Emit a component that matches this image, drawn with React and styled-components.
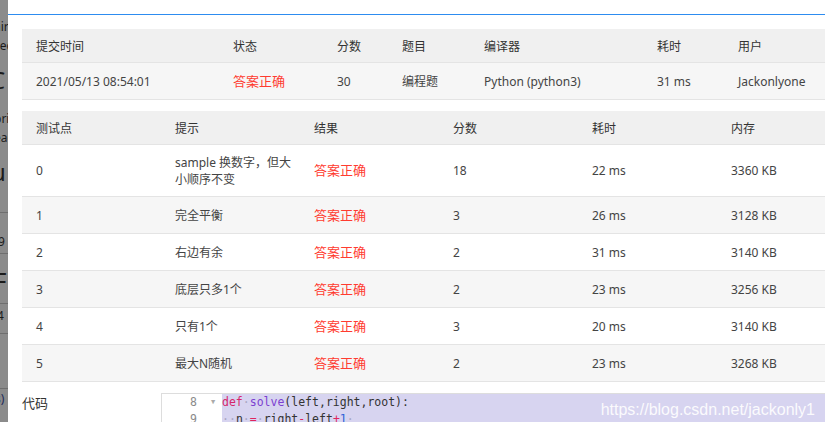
import React from 'react';
import styled, {createGlobalStyle} from 'styled-components';

const GlobalStyle = createGlobalStyle`
    html, body {
        margin: 0;
        padding: 0;
        overflow: hidden;
        background: #fff;
    }
    body {
        font-family: "Noto Sans", "Noto Sans CJK SC", sans-serif;
        font-size: 12px;
        color: #333;
    }
`;

const StyledRoot = styled.div`
    display: flex;
    width: 825px;
    height: 422px;
    overflow: hidden;
`;

const Backdrop = styled.div`
    flex: 0 0 8px;
    background: #8b8b8b;
    overflow: hidden;
    display: flex;
    flex-direction: column;
`;

const BackdropText = styled.div`
    flex-shrink: 0;
    white-space: nowrap;
    color: #1b1b1b;
    font-size: ${props => props.$size || 12}px;
    line-height: ${props => props.$size ? props.$size + 2 : 18}px;
    margin-top: ${props => props.$top || 0}px;
    margin-left: ${props => props.$shift || -6}px;
`;

const BackdropRule = styled.div`
    flex-shrink: 0;
    height: 1px;
    background: #6f6f6f;
    margin-top: ${props => props.$top || 0}px;
`;

const Modal = styled.div`
    flex: 1;
    min-width: 0;
    background: #fff;
    display: flex;
    flex-direction: column;
`;

const TopBar = styled.div`
    flex-shrink: 0;
    height: 14px;
    border-bottom: 1px solid #2d8cf0;
`;

const Body = styled.div`
    flex-shrink: 0;
    padding: 14px 0 0 14px;
    display: flex;
    flex-direction: column;
`;

const Table = styled.table`
    flex-shrink: 0;
    border-collapse: collapse;
    table-layout: fixed;
    width: ${props => props.$width}px;
    margin-bottom: ${props => props.$gap || 0}px;
`;

const Th = styled.th`
    background: #f0f0f0;
    font-weight: normal;
    text-align: left;
    color: #333;
    height: 33px;
    padding: 0 4px 0 14px;
    border-bottom: 1px solid #e4e4e4;
`;

const Tr = styled.tr`
    background: ${props => props.$odd ? '#f6f6f6' : '#fff'};
`;

const Td = styled.td`
    height: ${props => props.$height || 36}px;
    padding: 0 4px 0 14px;
    border-bottom: 1px solid #e4e4e4;
    color: ${props => props.$ok ? '#ff3b30' : '#444'};
    font-size: ${props => props.$ok ? 13 : 12}px;
    line-height: 17px;
    vertical-align: middle;
`;

const CodeRow = styled.div`
    flex-shrink: 0;
    display: flex;
    align-items: flex-start;
    margin-top: 11px;
`;

const CodeLabel = styled.div`
    width: 139px;
    font-size: 13px;
    color: #333;
    padding-top: 0;
`;

const Editor = styled.div`
    flex: 1;
    display: flex;
    border-left: 1px solid #ddd;
    border-top: 1px solid #ddd;
    height: 40px;
    position: relative;
    font-family: "DejaVu Sans Mono", "Liberation Mono", monospace;
    font-size: 11.5px;
    line-height: 17px;
`;

const Gutter = styled.div`
    width: 60px;
    background: #fff;
    color: #8a8a8a;
`;

const GutterLine = styled.div`
    display: flex;
    align-items: center;
    height: 17px;
    padding-left: 26px;
`;

const LineNo = styled.span`
    width: 9px;
    text-align: right;
`;

const Fold = styled.span`
    margin-left: 14px;
    font-size: 7px;
    color: #aaa;
`;

const Lines = styled.div`
    flex: 1;
    background: #d7d4f0;
    white-space: pre;
    color: #333;
`;

const Tok = styled.span`
    color: ${props => ({
        kw: '#d6276c',
        fn: '#7c3fd0',
        op: '#e0245e',
        num: '#2d62d8',
        ws: '#a9a6c4'
    }[props.$kind] || '#333')};
`;

const Watermark = styled.div`
    position: absolute;
    right: 10px;
    top: 6px;
    font-family: "Liberation Sans", Arial, sans-serif;
    font-size: 16px;
    line-height: 20px;
    color: #fff;
    opacity: 0.9;
`;

const summary = {
    columns: [
        {title: '提交时间', width: 197},
        {title: '状态', width: 104},
        {title: '分数', width: 65},
        {title: '题目', width: 82},
        {title: '编译器', width: 173},
        {title: '耗时', width: 81},
        {title: '用户', width: 118}
    ],
    row: ['2021/05/13 08:54:01', '答案正确', '30', '编程题', 'Python (python3)', '31 ms', 'Jackonlyone']
};

const caseColumns = ['测试点', '提示', '结果', '分数', '耗时', '内存'];

const cases = [
    ['0', 'sample 换数字，但大小顺序不变', '18', '22 ms', '3360 KB'],
    ['1', '完全平衡', '3', '26 ms', '3128 KB'],
    ['2', '右边有余', '2', '31 ms', '3140 KB'],
    ['3', '底层只多1个', '2', '23 ms', '3256 KB'],
    ['4', '只有1个', '3', '20 ms', '3140 KB'],
    ['5', '最大N随机', '2', '23 ms', '3268 KB']
];

const Dot = () => <Tok $kind="ws">·</Tok>;

const App = () => (
    <StyledRoot>
        <GlobalStyle />
        <Backdrop>
            <BackdropText $top={18}>air</BackdropText>
            <BackdropText $top={1}>sec</BackdropText>
            <BackdropText $size={24} $top={12} $shift={-10}>C</BackdropText>
            <BackdropText $top={17}>pri</BackdropText>
            <BackdropText $top={1}>eac</BackdropText>
            <BackdropText $size={24} $top={12} $shift={-9}>u</BackdropText>
            <BackdropText $top={5}>&nbsp;</BackdropText>
            <BackdropRule $top={4} />
            <BackdropText $top={20} $shift={-2}>9</BackdropText>
            <BackdropRule $top={2} />
            <BackdropText $size={24} $top={14} $shift={-6}>F</BackdropText>
            <BackdropRule $top={9} />
            <BackdropText $top={3} $shift={-3}>4</BackdropText>
            <BackdropRule $top={8} />
            <BackdropRule $top={54} />
            <BackdropText $top={1} $shift={-5} style={{color: '#1d2a5a'}}>s)</BackdropText>
        </Backdrop>
        <Modal>
            <TopBar />
            <Body>
                <Table $width={820} $gap={11}>
                    <colgroup>
                        {summary.columns.map(c => <col key={c.title} style={{width: c.width}} />)}
                    </colgroup>
                    <thead>
                        <tr>
                            {summary.columns.map(c => <Th key={c.title}>{c.title}</Th>)}
                        </tr>
                    </thead>
                    <tbody>
                        <Tr $odd>
                            {summary.row.map((v, i) => (
                                <Td key={i} $ok={v === '答案正确'}>{v}</Td>
                            ))}
                        </Tr>
                    </tbody>
                </Table>
                <Table $width={834}>
                    <colgroup>
                        {caseColumns.map(c => <col key={c} style={{width: 139}} />)}
                    </colgroup>
                    <thead>
                        <tr>
                            {caseColumns.map(c => <Th key={c}>{c}</Th>)}
                        </tr>
                    </thead>
                    <tbody>
                        {cases.map(([id, hint, score, time, mem], i) => (
                            <Tr key={id} $odd={i % 2 === 1}>
                                <Td $height={i === 0 ? 51 : 36}>{id}</Td>
                                <Td>{hint}</Td>
                                <Td $ok>答案正确</Td>
                                <Td>{score}</Td>
                                <Td>{time}</Td>
                                <Td>{mem}</Td>
                            </Tr>
                        ))}
                    </tbody>
                </Table>
                <CodeRow>
                    <CodeLabel>代码</CodeLabel>
                    <Editor>
                        <Gutter>
                            <GutterLine><LineNo>8</LineNo><Fold>▼</Fold></GutterLine>
                            <GutterLine><LineNo>9</LineNo></GutterLine>
                        </Gutter>
                        <Lines>
                            <div>
                                <Tok $kind="kw">def</Tok><Dot /><Tok $kind="fn">solve</Tok>(left,right,root):
                            </div>
                            <div>
                                <Dot /><Dot />n<Dot /><Tok $kind="op">=</Tok><Dot />right<Tok $kind="op">-</Tok>left<Tok $kind="op">+</Tok><Tok $kind="num">1</Tok><Dot />
                            </div>
                        </Lines>
                        <Watermark>https://blog.csdn.net/jackonly1</Watermark>
                    </Editor>
                </CodeRow>
            </Body>
        </Modal>
    </StyledRoot>
);

export default App;
